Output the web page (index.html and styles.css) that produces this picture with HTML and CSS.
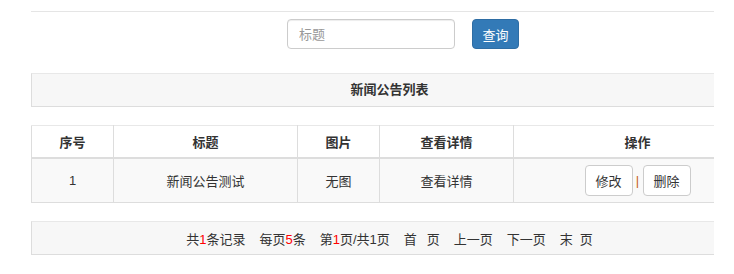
FILE: index.html
```html
<!DOCTYPE html>
<html lang="zh-CN">
<head>
<meta charset="utf-8">
<title>新闻公告列表</title>
<link rel="stylesheet" href="styles.css">
</head>
<body>
<div class="page">
  <div class="inner">
    <div class="rule"></div>
    <form class="search">
      <input class="search-input" type="text" placeholder="标题">
      <button class="btn-query" type="button">查询</button>
    </form>
    <div class="panel-head">新闻公告列表</div>
    <table class="grid">
      <colgroup>
        <col class="c1"><col class="c2"><col class="c3"><col class="c4"><col class="c5">
      </colgroup>
      <thead>
        <tr><th>序号</th><th>标题</th><th>图片</th><th>查看详情</th><th>操作</th></tr>
      </thead>
      <tbody>
        <tr>
          <td class="num">1</td>
          <td>新闻公告测试</td>
          <td>无图</td>
          <td>查看详情</td>
          <td><span class="ops"><button class="btn-op" type="button">修改</button><span class="sep">|</span><button class="btn-op" type="button">删除</button></span></td>
        </tr>
      </tbody>
    </table>
    <div class="pager">
      <span class="pg">共<b class="red">1</b>条记录</span>
      <span class="pg">每页<b class="red">5</b>条</span>
      <span class="pg">第<b class="red">1</b>页/共1页</span>
      <span class="pg">首<span class="sp"></span>页</span>
      <span class="pg">上一页</span>
      <span class="pg">下一页</span>
      <span class="pg">末<span class="sp2"></span>页</span>
    </div>
  </div>
</div>
</body>
</html>
```

FILE: styles.css
```css
html, body {
  margin: 0;
  padding: 0;
  background: #fff;
}
body {
  font-family: "Liberation Sans", "Noto Sans CJK SC", sans-serif;
  font-size: 13px;
  color: #333;
}
.page {
  margin-left: 31px;
  width: 683px;
  overflow: hidden;
  padding-top: 11px;
}
.inner {
  width: 730px;
}
.rule {
  width: 717px;
  border-top: 1px solid #e5e5e5;
}
.search {
  display: flex;
  align-items: center;
  margin: 7px 0 0 256px;
  height: 30px;
}
.search-input {
  box-sizing: border-box;
  width: 168px;
  height: 30px;
  padding: 0 11px;
  border: 1px solid #ccc;
  border-radius: 4px;
  font-family: inherit;
  font-size: 13px;
  color: #555;
  box-shadow: inset 0 1px 1px rgba(0,0,0,.075);
}
.search-input::placeholder {
  color: #999;
}
.btn-query {
  box-sizing: border-box;
  margin-left: 17px;
  width: 47px;
  height: 30px;
  padding: 0;
  border: 1px solid #2e6da4;
  border-radius: 4px;
  background: #337ab7;
  color: #fff;
  font-family: inherit;
  font-size: 13px;
}
.panel-head {
  box-sizing: border-box;
  width: 717px;
  height: 34px;
  margin-top: 24px;
  border: 1px solid #ddd;
  border-top-color: #e8e8e8;
  background: #f7f7f7;
  text-align: center;
  line-height: 32px;
  font-weight: bold;
}
.grid {
  margin-top: 18px;
  width: 730px;
  border-collapse: collapse;
  table-layout: fixed;
}
.c1 { width: 82px; }
.c2 { width: 184px; }
.c3 { width: 82px; }
.c4 { width: 134px; }
.c5 { width: 248px; }
.grid th, .grid td {
  border: 1px solid #ddd;
  text-align: center;
  padding: 0;
}
.grid th {
  height: 31px;
  border-top-color: #e8e8e8;
  border-bottom: 2px solid #ddd;
  font-weight: bold;
  background: #fff;
}
.grid td {
  height: 43px;
  background: #f9f9f9;
}
.ops {
  display: inline-flex;
  align-items: center;
}
.btn-op {
  box-sizing: border-box;
  width: 48px;
  height: 31px;
  padding: 0;
  border: 1px solid #ccc;
  border-radius: 4px;
  background: #fff;
  color: #333;
  font-family: inherit;
  font-size: 13px;
}
.sep {
  width: 10px;
  text-align: center;
  color: #c7611a;
  font-size: 13px;
}
.pager {
  box-sizing: border-box;
  width: 717px;
  height: 34px;
  margin-top: 18px;
  border: 1px solid #ddd;
  border-top-color: #e8e8e8;
  background: #f7f7f7;
  display: flex;
  justify-content: center;
  align-items: center;
  padding-left: 0;
}
.pg { margin-right: 14px; }
.pg:last-child { margin-right: 0; }
.red {
  color: #f00;
  font-weight: normal;
}
.sp { display: inline-block; width: 10px; }
.sp2 { display: inline-block; width: 7px; }
```
